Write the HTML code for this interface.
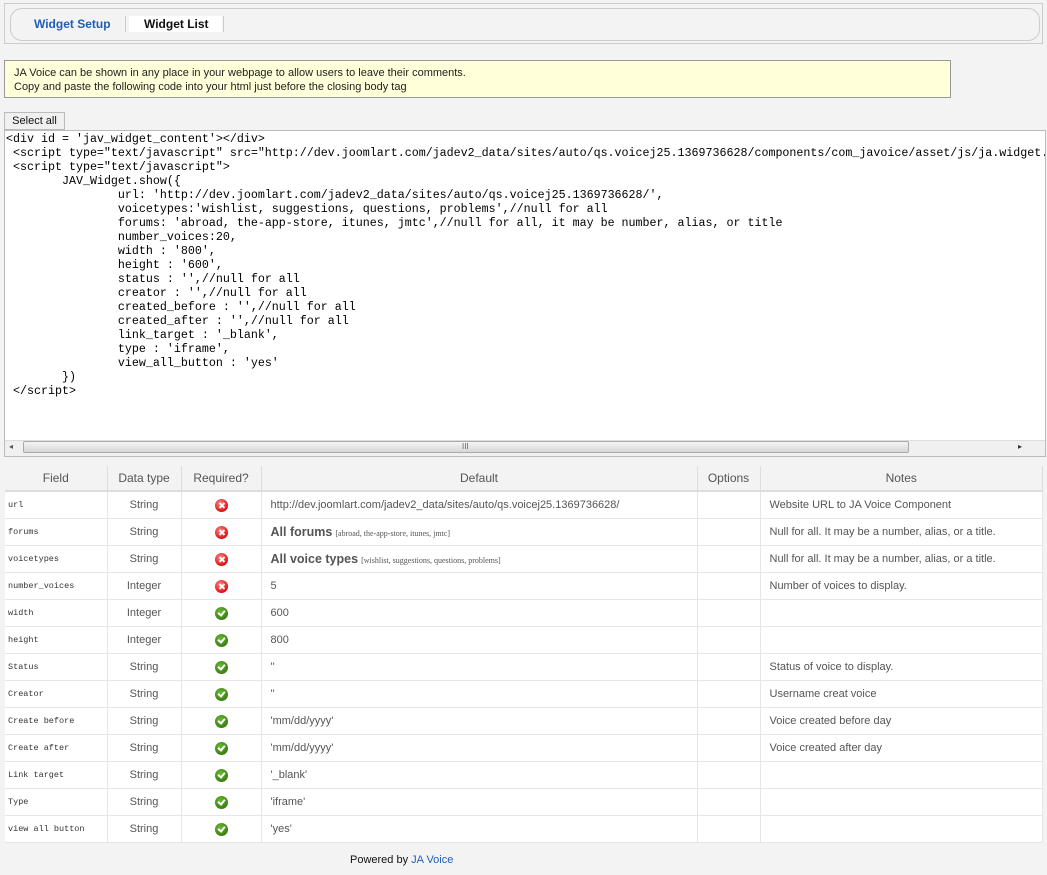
<!DOCTYPE html>
<html><head><meta charset="utf-8">
<style>
body{margin:0;background:#f3f3f3;font-family:"Liberation Sans",Arial,sans-serif;font-size:11px;color:#333;width:1047px;height:875px;position:relative;overflow:hidden}
.abs{position:absolute}
#outer{left:4px;top:3px;width:1039px;height:41px;border:1px solid #ccc;box-sizing:border-box}
#inner{left:10px;top:8px;width:1030px;height:33px;border:1px solid #ccc;border-radius:12px;box-sizing:border-box}
.tab{top:16px;height:16px;font-size:12px;font-weight:bold;line-height:16px}
#note{left:4px;top:60px;width:947px;height:38px;border:1px solid #999;background:#ffffd9;box-sizing:border-box;padding:5px 0 0 9px;line-height:14px;color:#222}
#btn{left:4px;top:112px;width:61px;height:18px;border:1px solid #bbb;background:#f0f0f0;box-sizing:border-box;text-align:center;line-height:16px;color:#111}
#code{left:4px;top:130px;width:1042px;height:327px;border:1px solid #bbb;background:#fff;box-sizing:border-box;overflow:hidden}
pre{margin:0;position:absolute;left:1px;top:1px;font-family:"Liberation Mono","Courier New",monospace;font-size:11.67px;line-height:14px;color:#000;tab-size:8;white-space:pre}
#sb{left:5px;top:440px;width:1040px;height:15px;background:#f0f0f0;border-top:1px solid #ddd}
#thumb{left:23px;top:441px;width:886px;height:12px;border:1px solid #aaa;border-radius:2px;background:linear-gradient(#f4f4f4,#d6d6d6);box-sizing:border-box}
table{position:absolute;left:5px;top:466px;border-collapse:collapse;table-layout:fixed;width:1038px;background:#fff}
td,th{height:26px;border-right:1px solid #e6e6e6;border-bottom:1px solid #e6e6e6;padding:0;font-weight:normal;color:#555;font-size:11px}
th{background:#f3f3f3;color:#555;font-size:12px;height:24px;border-bottom:2px solid #ddd;border-right:1px solid #ddd}
td.f{font-family:"Liberation Mono",monospace;font-size:8.5px;padding-left:3px;color:#333}
td.c{text-align:center}
td.l{padding-left:9px}
.big{font-size:12.5px;font-weight:bold;color:#555}
.sm{font-family:"Liberation Serif",serif;font-size:8px}
.ic{display:inline-block;width:13px;height:13px;border-radius:50%;vertical-align:middle;position:relative}
.x{background:radial-gradient(circle at 40% 35%,#f88,#d11 70%,#a00)}
.x:before,.x:after{content:"";position:absolute;left:6px;top:3px;width:2px;height:7px;background:#fff;transform:rotate(45deg)}
.x:after{transform:rotate(-45deg)}
.ok{background:radial-gradient(circle at 40% 35%,#6b3,#3a7a10 75%)}
.ok:before{content:"";position:absolute;left:3px;top:2px;width:5px;height:3px;border-left:2px solid #fff;border-bottom:2px solid #fff;transform:rotate(-50deg);top:3px}
#foot{left:350px;top:854px;font-size:11px;color:#111}
</style></head><body>
<div class="abs" id="outer"></div>
<div class="abs" id="inner"></div>
<div class="abs tab" style="left:34px;color:#1f5fb5">Widget Setup</div>
<div class="abs" style="left:125px;top:16px;width:1px;height:16px;background:#ccc"></div>
<div class="abs tab" style="left:129px;width:93px;background:#fff;padding-left:15px;box-sizing:border-box;color:#111">Widget List</div>
<div class="abs" style="left:223px;top:16px;width:1px;height:16px;background:#ccc"></div>
<div class="abs" id="note">JA Voice can be shown in any place in your webpage to allow users to leave their comments.<br>Copy and paste the following code into your html just before the closing body tag</div>
<div class="abs" id="btn">Select all</div>
<div class="abs" id="code"><pre>&lt;div id = 'jav_widget_content'&gt;&lt;/div&gt;
 &lt;script type="text/javascript" src="http://dev.joomlart.com/jadev2_data/sites/auto/qs.voicej25.1369736628/components/com_javoice/asset/js/ja.widget.js"&gt;&lt;/script&gt;
 &lt;script type="text/javascript"&gt;
	JAV_Widget.show({
		url: 'http://dev.joomlart.com/jadev2_data/sites/auto/qs.voicej25.1369736628/',
		voicetypes:'wishlist, suggestions, questions, problems',//null for all
		forums: 'abroad, the-app-store, itunes, jmtc',//null for all, it may be number, alias, or title
		number_voices:20,
		width : '800',
		height : '600',
		status : '',//null for all
		creator : '',//null for all
		created_before : '',//null for all
		created_after : '',//null for all
		link_target : '_blank',
		type : 'iframe',
		view_all_button : 'yes'
	})
 &lt;/script&gt;</pre></div>
<div class="abs" id="sb"></div>
<div class="abs" style="left:9px;top:442px;font-size:8px;color:#555">◂</div>
<div class="abs" id="thumb"></div>
<div class="abs" style="left:462px;top:442px;font-size:8px;color:#666">III</div>
<div class="abs" style="left:1018px;top:442px;font-size:8px;color:#333">▸</div>
<table>
<colgroup><col style="width:102px"><col style="width:74px"><col style="width:80px"><col style="width:436px"><col style="width:63px"><col></colgroup>
<tr><th>Field</th><th>Data type</th><th>Required?</th><th>Default</th><th>Options</th><th>Notes</th></tr>
<tr><td class="f">url</td><td class="c">String</td><td class="c"><span class="ic x"></span></td><td class="l">http://dev.joomlart.com/jadev2_data/sites/auto/qs.voicej25.1369736628/</td><td></td><td class="l">Website URL to JA Voice Component</td></tr>
<tr><td class="f">forums</td><td class="c">String</td><td class="c"><span class="ic x"></span></td><td class="l"><span class="big">All forums</span> <span class="sm">[abroad, the-app-store, itunes, jmtc]</span></td><td></td><td class="l">Null for all. It may be a number, alias, or a title.</td></tr>
<tr><td class="f">voicetypes</td><td class="c">String</td><td class="c"><span class="ic x"></span></td><td class="l"><span class="big">All voice types</span> <span class="sm">[wishlist, suggestions, questions, problems]</span></td><td></td><td class="l">Null for all. It may be a number, alias, or a title.</td></tr>
<tr><td class="f">number_voices</td><td class="c">Integer</td><td class="c"><span class="ic x"></span></td><td class="l">5</td><td></td><td class="l">Number of voices to display.</td></tr>
<tr><td class="f">width</td><td class="c">Integer</td><td class="c"><span class="ic ok"></span></td><td class="l">600</td><td></td><td></td></tr>
<tr><td class="f">height</td><td class="c">Integer</td><td class="c"><span class="ic ok"></span></td><td class="l">800</td><td></td><td></td></tr>
<tr><td class="f">Status</td><td class="c">String</td><td class="c"><span class="ic ok"></span></td><td class="l">''</td><td></td><td class="l">Status of voice to display.</td></tr>
<tr><td class="f">Creator</td><td class="c">String</td><td class="c"><span class="ic ok"></span></td><td class="l">''</td><td></td><td class="l">Username creat voice</td></tr>
<tr><td class="f">Create before</td><td class="c">String</td><td class="c"><span class="ic ok"></span></td><td class="l">'mm/dd/yyyy'</td><td></td><td class="l">Voice created before day</td></tr>
<tr><td class="f">Create after</td><td class="c">String</td><td class="c"><span class="ic ok"></span></td><td class="l">'mm/dd/yyyy'</td><td></td><td class="l">Voice created after day</td></tr>
<tr><td class="f">Link target</td><td class="c">String</td><td class="c"><span class="ic ok"></span></td><td class="l">'_blank'</td><td></td><td></td></tr>
<tr><td class="f">Type</td><td class="c">String</td><td class="c"><span class="ic ok"></span></td><td class="l">'iframe'</td><td></td><td></td></tr>
<tr><td class="f">view all button</td><td class="c">String</td><td class="c"><span class="ic ok"></span></td><td class="l">'yes'</td><td></td><td></td></tr>
</table>
<div class="abs" id="foot">Powered by <span style="color:#1f5fb5">JA Voice</span></div>
</body></html>
